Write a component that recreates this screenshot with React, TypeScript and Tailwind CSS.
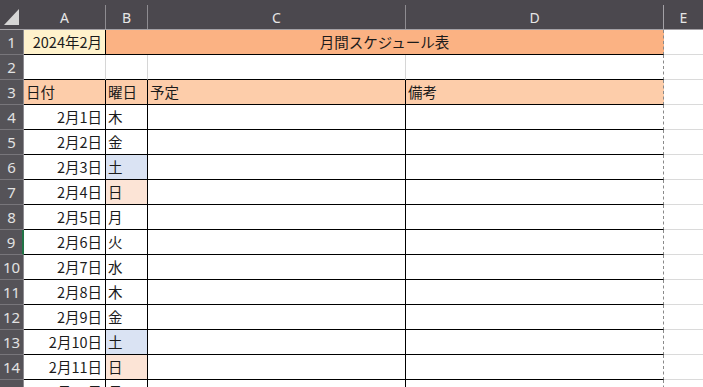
import React from "react";

const days = [
  { d: "2月1日", w: "木" },
  { d: "2月2日", w: "金" },
  { d: "2月3日", w: "土" },
  { d: "2月4日", w: "日" },
  { d: "2月5日", w: "月" },
  { d: "2月6日", w: "火" },
  { d: "2月7日", w: "水" },
  { d: "2月8日", w: "木" },
  { d: "2月9日", w: "金" },
  { d: "2月10日", w: "土" },
  { d: "2月11日", w: "日" },
  { d: "2月12日", w: "月" },
];

function RowHead({ n, active }: { n: number; active?: boolean }) {
  return (
    <div
      className={
        "w-[24px] h-[25px] shrink-0 bg-[#555358] border-b border-[#78767b] border-r flex items-center justify-center text-[15px] text-[#e2e2e2] font-['Noto_Sans',sans-serif] " +
        (active ? "border-r-2 border-r-[#217346]" : "border-r-[#8e8c91]")
      }
    >
      {n}
    </div>
  );
}

export default function App() {
  return (
    <div className="w-[703px] h-[387px] overflow-hidden bg-white font-['Noto_Sans_CJK_JP',sans-serif] text-[14.5px] text-[#1b1b1b]">
      {/* column header */}
      <div className="flex h-[30px] bg-[#4b484e] border-b border-[#a3a1a6] text-[#e6e6e6] font-['Noto_Sans',sans-serif] text-[14px]">
        <div className="w-[24px] shrink-0 h-full flex items-end">
          <svg width="24" height="29" viewBox="0 0 24 29">
            <polygon points="4,25 19,25 19,9" fill="#d6d6d6" />
          </svg>
        </div>
        <div className="flex items-end flex-1">
          <div className="w-[82px] h-[24px] border-r border-[#8e8c91] flex items-center justify-center">A</div>
          <div className="w-[42px] h-[24px] border-r border-[#8e8c91] flex items-center justify-center">B</div>
          <div className="w-[258px] h-[24px] border-r border-[#8e8c91] flex items-center justify-center">C</div>
          <div className="w-[258px] h-[24px] border-r border-[#a3a1a6] flex items-center justify-center">D</div>
          <div className="flex-1 h-[24px] flex items-center justify-center">E</div>
        </div>
      </div>

      {/* row 1 */}
      <div className="flex h-[25px]">
        <RowHead n={1} />
        <div className="w-[82px] shrink-0 bg-[#fff2cc] border-r border-b border-black flex items-center justify-end pr-[3px]">2024年2月</div>
        <div className="w-[558px] shrink-0 bg-[#fbb283] border-b border-b-black border-r border-r-[#8a8a8a] [border-right-style:dashed] flex items-center justify-center">月間スケジュール表</div>
        <div className="flex-1 border-b border-[#dadada]"></div>
      </div>

      {/* row 2 */}
      <div className="flex h-[25px]">
        <RowHead n={2} />
        <div className="w-[82px] shrink-0 border-r border-r-[#d6d6d6] border-b border-b-black"></div>
        <div className="w-[42px] shrink-0 border-r border-r-[#d6d6d6] border-b border-b-black"></div>
        <div className="w-[258px] shrink-0 border-r border-r-[#d6d6d6] border-b border-b-black"></div>
        <div className="w-[258px] shrink-0 border-b border-b-black border-r border-r-[#8a8a8a] [border-right-style:dashed]"></div>
        <div className="flex-1 border-b border-[#dadada]"></div>
      </div>

      {/* row 3 */}
      <div className="flex h-[25px]">
        <RowHead n={3} />
        <div className="w-[82px] shrink-0 bg-[#fdcdaa] border-r border-b border-black flex items-center pl-[2px]">日付</div>
        <div className="w-[42px] shrink-0 bg-[#fdcdaa] border-r border-b border-black flex items-center pl-[2px]">曜日</div>
        <div className="w-[258px] shrink-0 bg-[#fdcdaa] border-r border-b border-black flex items-center pl-[2px]">予定</div>
        <div className="w-[258px] shrink-0 bg-[#fdcdaa] border-b border-b-black border-r border-r-[#8a8a8a] [border-right-style:dashed] flex items-center pl-[2px]">備考</div>
        <div className="flex-1 border-b border-[#dadada]"></div>
      </div>

      {days.map((r, i) => {
        const bg = r.w === "土" ? "bg-[#dae3f3]" : r.w === "日" ? "bg-[#fce4d6]" : "bg-white";
        return (
          <div key={i} className="flex h-[25px]">
            <RowHead n={i + 4} active={i + 4 === 9} />
            <div className="w-[82px] shrink-0 border-r border-b border-black flex items-center justify-end pr-[3px]">{r.d}</div>
            <div className={"w-[42px] shrink-0 border-r border-b border-black flex items-center pl-[2px] " + bg}>{r.w}</div>
            <div className="w-[258px] shrink-0 border-r border-b border-black"></div>
            <div className="w-[258px] shrink-0 border-b border-b-black border-r border-r-[#8a8a8a] [border-right-style:dashed]"></div>
            <div className="flex-1 border-b border-[#dadada]"></div>
          </div>
        );
      })}
    </div>
  );
}
